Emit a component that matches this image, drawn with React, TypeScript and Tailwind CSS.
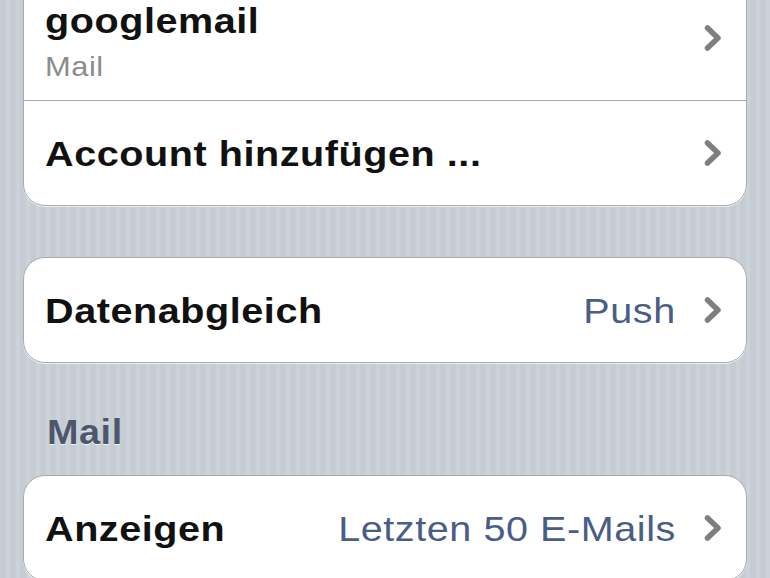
import type { ReactNode } from "react";

const font = { fontFamily: '"Liberation Sans", Arial, Helvetica, sans-serif' };

function Chevron() {
    return (
        <svg width="20" height="30" viewBox="0 0 20 30" className="shrink-0">
            <path
                d="M4.5 5 L15 15 L4.5 25"
                fill="none"
                stroke="#7f7f7f"
                strokeWidth="5.5"
                strokeLinecap="round"
                strokeLinejoin="round"
            />
        </svg>
    );
}

function Row({ label, value, tall, children }: { label?: string; value?: string; tall?: boolean; children?: ReactNode }) {
    return (
        <div className={`flex items-center pl-[21px] pr-[23px] ${tall ? "h-[124px]" : "h-[104px]"}`}>
            {children ?? (
                <span className="origin-left scale-x-[1.13] text-[35px] leading-[35px] font-bold tracking-[0.5px] text-[#111]">
                    {label}
                </span>
            )}
            <div className="ml-auto flex items-center">
                {value && (
                    <span className="mr-[27px] origin-right scale-x-[1.13] text-[35px] leading-[35px] tracking-[0.5px] text-[#4a5d87]">
                        {value}
                    </span>
                )}
                <Chevron />
            </div>
        </div>
    );
}

function Card({ children, className = "" }: { children: ReactNode; className?: string }) {
    return (
        <div
            className={`mx-[23px] rounded-[22px] border border-[#a7abb0] bg-white shadow-[0_1px_0_rgba(255,255,255,0.7)] ${className}`}
        >
            {children}
        </div>
    );
}

export default function App() {
    return (
        <div
            style={font}
            className="h-[578px] w-[770px] overflow-hidden bg-[repeating-linear-gradient(90deg,#c5ccd4_0px,#c5ccd4_6px,#cbd2d9_6px,#cbd2d9_10px)]"
        >
            <Card className="mt-[-25px]">
                <Row tall>
                    <div className="mt-[7px] flex flex-col">
                        <span className="origin-left scale-x-[1.13] text-[35px] leading-[35px] font-bold tracking-[0.5px] text-[#111]">
                            googlemail
                        </span>
                        <span className="mt-[15px] origin-left scale-x-[1.1] text-[28px] leading-[28px] tracking-[0.5px] text-[#8c8c8c]">
                            Mail
                        </span>
                    </div>
                </Row>
                <div className="h-px bg-[#a7abb0]" />
                <Row label="Account hinzufügen ..." />
            </Card>

            <Card className="mt-[51px]">
                <Row label="Datenabgleich" value="Push" />
            </Card>

            <div className="pl-[47px] pt-[51px] pb-[24px]">
                <span className="inline-block origin-left scale-x-[1.08] text-[35px] leading-[35px] font-bold tracking-[0.5px] text-[#4c566c] [text-shadow:0_1px_0_rgba(255,255,255,0.8)]">
                    Mail
                </span>
            </div>

            <Card>
                <Row label="Anzeigen" value="Letzten 50 E-Mails" />
            </Card>
        </div>
    );
}
